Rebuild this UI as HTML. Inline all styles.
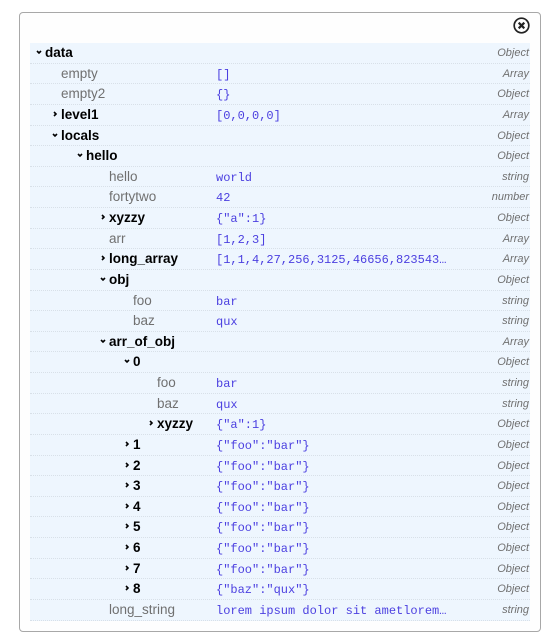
<!DOCTYPE html>
<html><head><meta charset="utf-8"><style>
body{margin:0;width:549px;height:639px;background:#fff;font-family:"Liberation Sans",sans-serif;position:relative;overflow:hidden}
.panel{position:absolute;left:19px;top:12px;width:520px;height:618px;border:1px solid #a8a8a8;border-radius:4px;background:#fefefe}
.close{position:absolute;left:513px;top:17px;width:17px;height:17px}
.tbl{position:absolute;left:30px;top:43px;width:500px;background:#eef6fe}
.row{position:relative;height:20.63px;border-bottom:1px dotted #d8e0e8;box-sizing:border-box}
.k{position:absolute;top:2px;font-size:13.5px;color:#707070;white-space:nowrap}
.k.b{font-weight:bold;color:#000}
.ar{position:absolute;top:6px;width:6px;height:6px}
.v{position:absolute;left:186px;top:4px;font-family:"Liberation Mono",monospace;font-size:12px;color:#4b3fe0;white-space:nowrap}
.t{position:absolute;right:1px;top:4px;font-size:11px;font-style:italic;color:#707070}
</style></head><body>
<div class="panel"></div>
<svg class="close" viewBox="0 0 17 17"><circle cx="8.5" cy="8.5" r="7.3" fill="none" stroke="#222" stroke-width="1.7"/><path d="M5.7 5.7L11.3 11.3M11.3 5.7L5.7 11.3" stroke="#222" stroke-width="2.2"/></svg>
<div class="tbl" id="t"></div>
<script>
var X=[15,31,56,79,103,127];
var R=[
[0,'o','data','','Object'],[1,0,'empty','[]','Array'],[1,0,'empty2','{}','Object'],[1,'c','level1','[0,0,0,0]','Array'],
[1,'o','locals','','Object'],[2,'o','hello','','Object'],[3,0,'hello','world','string'],[3,0,'fortytwo','42','number'],
[3,'c','xyzzy','{"a":1}','Object'],[3,0,'arr','[1,2,3]','Array'],[3,'c','long_array','[1,1,4,27,256,3125,46656,823543…','Array'],
[3,'o','obj','','Object'],[4,0,'foo','bar','string'],[4,0,'baz','qux','string'],[3,'o','arr_of_obj','','Array'],
[4,'o','0','','Object'],[5,0,'foo','bar','string'],[5,0,'baz','qux','string'],[5,'c','xyzzy','{"a":1}','Object'],
[4,'c','1','{"foo":"bar"}','Object'],[4,'c','2','{"foo":"bar"}','Object'],[4,'c','3','{"foo":"bar"}','Object'],
[4,'c','4','{"foo":"bar"}','Object'],[4,'c','5','{"foo":"bar"}','Object'],[4,'c','6','{"foo":"bar"}','Object'],
[4,'c','7','{"foo":"bar"}','Object'],[4,'c','8','{"baz":"qux"}','Object'],[3,0,'long_string','lorem ipsum dolor sit ametlorem…','string']];
var h='';
function e(s){return s.replace(/&/g,'&amp;').replace(/</g,'&lt;')}
R.forEach(function(r){
 var x=X[r[0]];h+='<div class="row">';
 if(r[1])h+='<svg class="ar" style="left:'+(x-9)+'px" viewBox="0 0 6 6"><path d="'+(r[1]=='o'?'M1 2L3 4L5 2':'M2 1L4 3L2 5')+'" fill="none" stroke="#000" stroke-width="1.6"/></svg>';
 h+='<span class="k'+(r[1]?' b':'')+'" style="left:'+x+'px">'+e(r[2])+'</span>';
 h+='<span class="v">'+e(r[3])+'</span><span class="t">'+r[4]+'</span></div>';
});
document.getElementById('t').innerHTML=h;
</script>
</body></html>
